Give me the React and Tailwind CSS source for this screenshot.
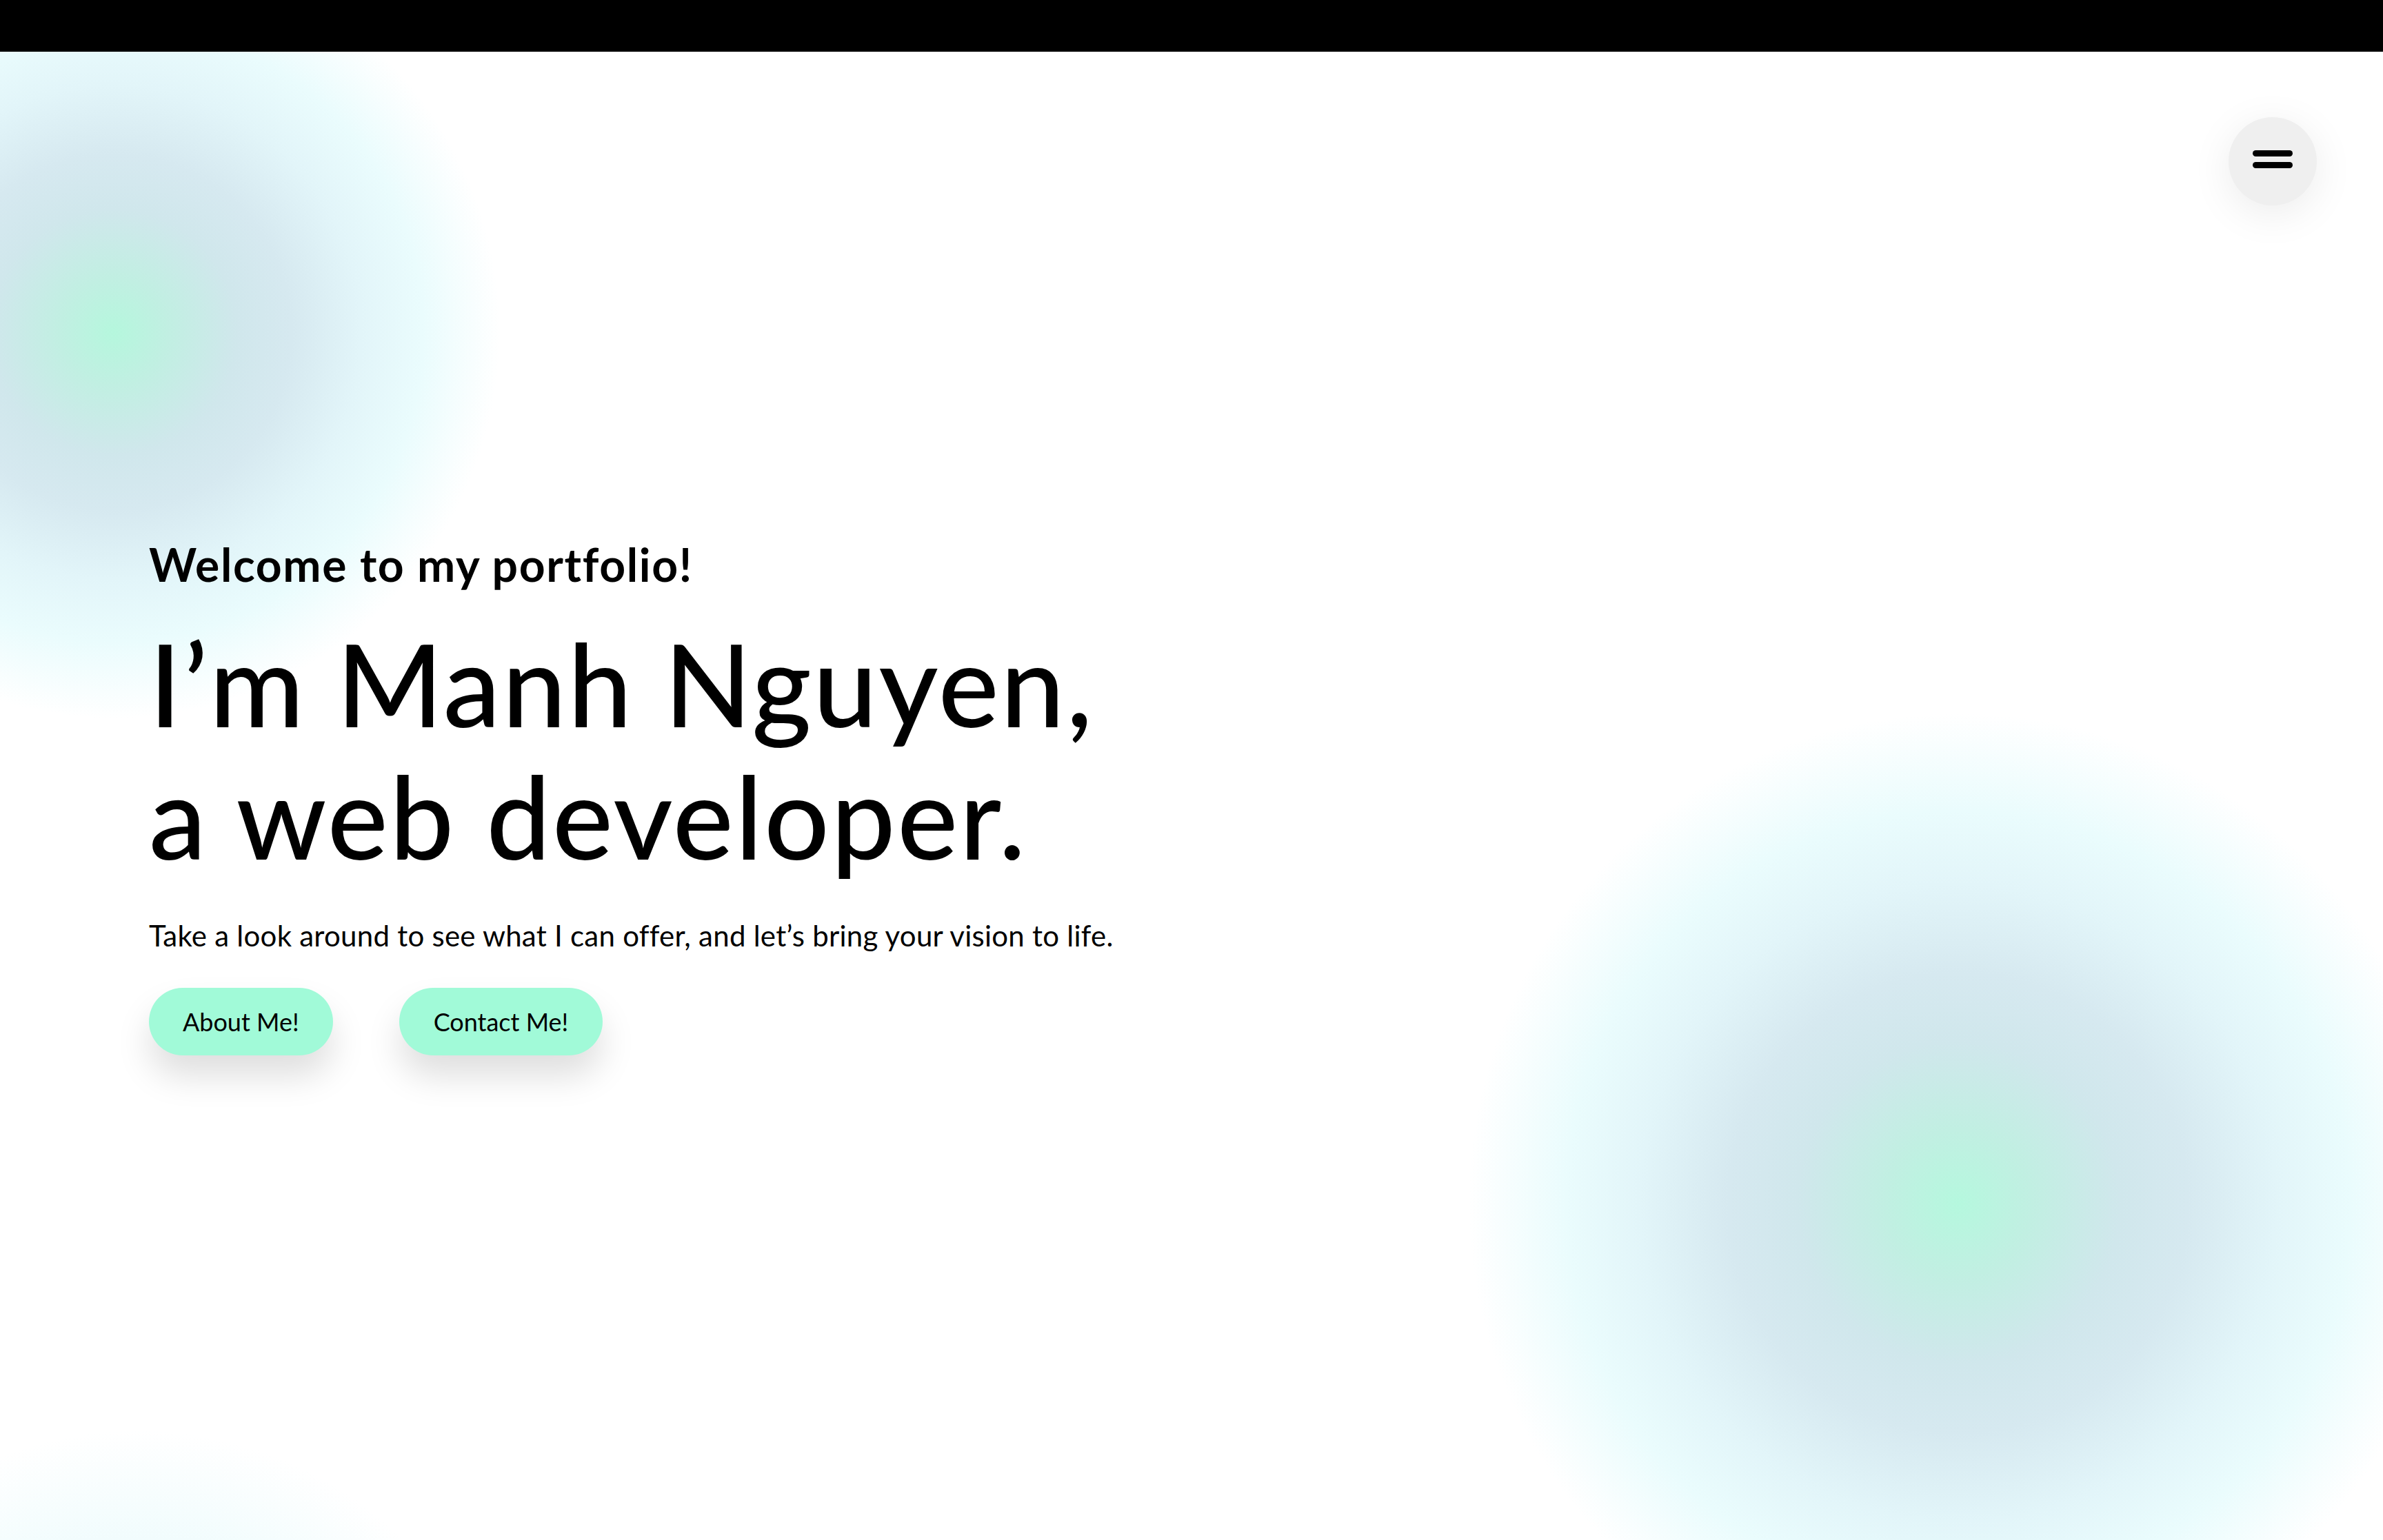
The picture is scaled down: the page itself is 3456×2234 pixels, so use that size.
export default function App() {
  const font = { fontFamily: "Lato, 'Open Sans', sans-serif" };

  return (
    <div className="w-[3456px] min-h-[2234px] bg-white text-black" style={font}>
      {/* top strip */}
      <div className="h-[75px] bg-black" />

      <section className="relative h-[2159px] overflow-hidden">
        {/* soft blobs */}
        <div className="pointer-events-none absolute left-[-395px] top-[-153px] h-[1120px] w-[1120px] rounded-full bg-[radial-gradient(circle_closest-side,#b5f7dd_0%,#c1efe2_14%,#d0e7ec_32%,#d6e9f0_46%,#e2f5f9_64%,#eafcfd_80%,rgba(255,255,255,0)_100%)]" />
        <div className="pointer-events-none absolute left-[2130px] top-[960px] h-[1420px] w-[1420px] rounded-full bg-[radial-gradient(circle_closest-side,#b5f8de_0%,#c1efe2_15%,#d0e7ec_33%,#d6e9f0_47%,#e2f5f9_65%,#eafcfd_80%,rgba(255,255,255,0)_100%)]" />
        <div className="pointer-events-none absolute left-[-350px] top-[2000px] h-[1100px] w-[1100px] rounded-full bg-[radial-gradient(circle_closest-side,#d2f3ee_0%,#e4f7fa_50%,#f0fcfd_75%,rgba(255,255,255,0)_100%)] opacity-80" />

        {/* menu button */}
        <button className="absolute right-[96px] top-[95px] z-10 flex h-[128px] w-[128px] flex-col items-center justify-center gap-[8px] rounded-full bg-[#efefef] pb-[7px] shadow-[0_12px_60px_rgba(0,0,0,0.08)]">
          <span className="block h-[9px] w-[58px] rounded-full bg-black" />
          <span className="block h-[9px] w-[58px] rounded-full bg-black" />
        </button>

        {/* hero */}
        <div className="relative z-10 flex h-full flex-col justify-center pl-[216px]">
          <p className="text-[66px] font-bold leading-[80px] tracking-[0.025em]">
            Welcome to my portfolio!
          </p>
          <h1 className="mt-9 text-[166px] font-medium leading-[192px] tracking-[0.015em]">
            I’m Manh Nguyen,
            <br />
            a web developer.
          </h1>
          <p className="mt-[53px] text-[42px] leading-[50px] tracking-[0.006em]">
            Take a look around to see what I can offer, and let’s bring your vision to life.
          </p>
          <div className="mt-[51px] flex gap-[96px]">
            <a className="flex h-[98px] items-center rounded-full bg-[#a1fad8] px-[49px] text-[36px] shadow-[0_30px_50px_rgba(0,0,0,0.13)]">
              About Me!
            </a>
            <a className="flex h-[98px] items-center rounded-full bg-[#a1fad8] px-[50px] text-[36px] shadow-[0_30px_50px_rgba(0,0,0,0.13)]">
              Contact Me!
            </a>
          </div>
        </div>
      </section>
    </div>
  );
}
